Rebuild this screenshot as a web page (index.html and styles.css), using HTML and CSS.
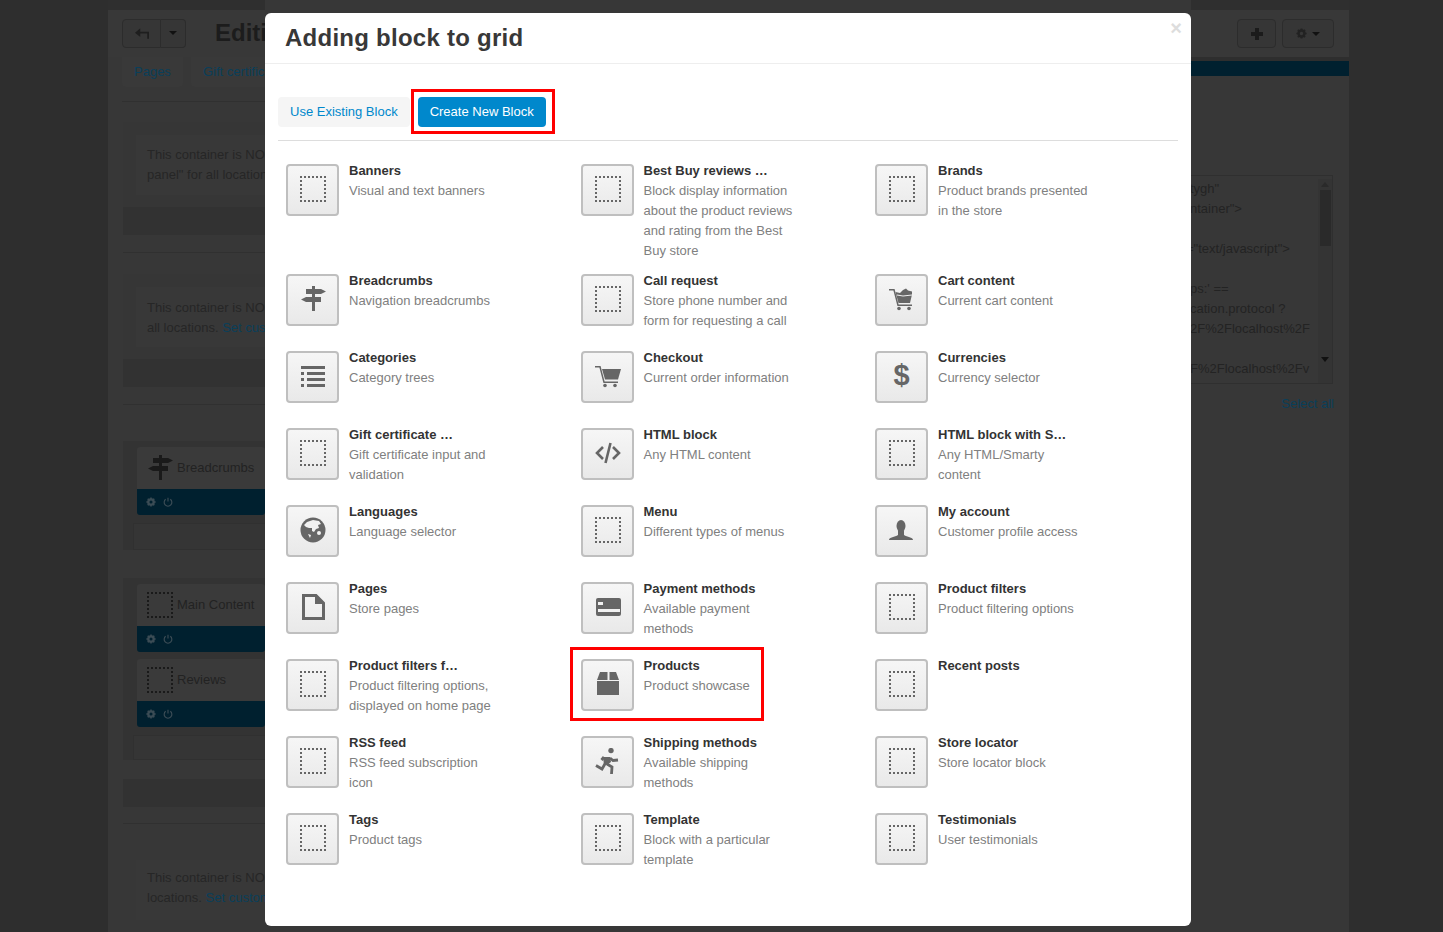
FILE: index.html
```html
<!DOCTYPE html>
<html lang="en">
<head>
    <meta charset="UTF-8">
    <meta name="viewport" content="width=device-width, initial-scale=1.0">
    <title>Adding block to grid</title>
    <link rel="stylesheet" href="styles.css">
</head>
<body>

    <!-- Icon set -->
    <svg class="sprite" xmlns="http://www.w3.org/2000/svg">
        <symbol id="i-dotted" viewBox="0 0 26 26"><rect x="1" y="1" width="24" height="24" fill="none" stroke="currentColor" stroke-width="2" stroke-dasharray="2 2" stroke-dashoffset="1" shape-rendering="crispEdges"/></symbol>
        <symbol id="i-sign" viewBox="0 0 26 26"><path fill="currentColor" d="M12 0h3v3h6l5 2.500-5 2.500h-6v3h6v5h-6v9h-3v-9H6l-5-2.500L6 11h6V8H6V3h6z"/></symbol>
        <symbol id="i-list" viewBox="0 0 26 26"><path fill="currentColor" d="M1 3h24v3H1zM7 9h18v3H7zM7 15h18v3H7zM7 21h18v3H7zM1 9h3v3H1zM1 15h3v3H1zM1 21h3v3H1z"/></symbol>
        <symbol id="i-globe" viewBox="0 0 26 26"><circle cx="13" cy="13" r="12.500" fill="currentColor"/><path fill="#f1f1f1" d="M4 8l3-3 6-2 6 1 2 3-3 1 1 3-3 1-2 3-2-1v-3H9L6 10z"/><circle cx="19" cy="16" r="2" fill="#f1f1f1"/><path fill="#f1f1f1" d="M8 17l3 1-1 3z"/></symbol>
        <symbol id="i-cart" viewBox="0 0 26 26"><path fill="none" stroke="currentColor" stroke-width="1.500" d="M0 3.800h5L9 19.300h14"/><path fill="currentColor" d="M7 6h19l-3 10.500H10z"/><circle cx="10" cy="22.500" r="1.800" fill="currentColor"/><circle cx="20" cy="22.500" r="1.800" fill="currentColor"/></symbol>
        <symbol id="i-cart-full" viewBox="0 0 26 26"><path fill="none" stroke="currentColor" stroke-width="1.500" d="M0 3.800h5L9 19.300h14"/><path fill="currentColor" d="M6.500 6l4.500 1 3-3 3-1.500 2 2 4 1v3l-2 8.500H9.500z"/><path fill="none" stroke="#eee" d="M8 9l6 1 9-1"/><circle cx="10" cy="22.500" r="1.800" fill="currentColor"/><circle cx="20" cy="22.500" r="1.800" fill="currentColor"/></symbol>
        <symbol id="i-code" viewBox="0 0 26 26"><path fill="none" stroke="currentColor" stroke-width="2.600" d="M8 7l-6 6 6 6M18 7l6 6-6 6"/><path fill="none" stroke="currentColor" stroke-width="2.600" d="M15.500 3l-5 20"/></symbol>
        <symbol id="i-user" viewBox="0 0 26 26"><ellipse cx="12" cy="9" rx="4.500" ry="6" fill="currentColor"/><path fill="currentColor" d="M0 23c0-3 6-3 9-5v-4h6v4c3 2 9 2 9 5z"/></symbol>
        <symbol id="i-page" viewBox="0 0 26 26"><path fill="none" stroke="currentColor" stroke-width="3" d="M3.500 1.500H16L23.500 9v15.500h-20z"/><path fill="currentColor" d="M15 0l10 10H15z"/></symbol>
        <symbol id="i-card" viewBox="0 0 26 26"><rect x="1" y="4" width="25" height="18" rx="2" fill="currentColor"/><path fill="#f1f1f1" d="M3 8h5v3H3zM3 15h22v3H3z"/></symbol>
        <symbol id="i-box" viewBox="0 0 26 26"><path fill="currentColor" d="M5 1h7.500v8H2zM14.500 1H21l3 8h-9.500zM2 10h22v14H2z"/></symbol>
        <symbol id="i-run" viewBox="0 0 26 26"><circle cx="16" cy="2.600" r="2.700" fill="currentColor"/><path fill="currentColor" d="M8 9h7l1 5-4 3H9z"/><path fill="none" stroke="currentColor" stroke-width="2.800" d="M9 9L6.500 12M15 10l3 2.500 5-.5M10.500 15l-3.500 6-6-3.500M12 16l5 3-.5 7"/></symbol>
        <symbol id="i-gear" viewBox="0 0 26 26"><circle cx="13" cy="13" r="7" fill="none" stroke="currentColor" stroke-width="6"/><path fill="none" stroke="currentColor" stroke-width="4" d="M13 1v4M13 21v4M1 13h4M21 13h4M4.500 4.500l3 3M18.500 18.500l3 3M4.500 21.500l3-3M18.500 7.500l3-3"/></symbol>
        <symbol id="i-power" viewBox="0 0 26 26"><path fill="none" stroke="currentColor" stroke-width="3" d="M7 6a10 10 0 1 0 12 0M13 2v10"/></symbol>
    </svg>

    <!-- Page behind the dialog -->
    <div class="page">
        <div class="col-left">
            <div class="topband"></div>
            <div class="toolbar">
                <div class="btn-group">
                    <span class="btn btn-back">
                        <svg class="back-arrow" viewBox="0 0 16 12"><path fill="currentColor" d="M6 0v4h10v8h-2V6H6v4L0 5z"/></svg>
                    </span>
                    <span class="btn btn-caret"><i class="caret"></i></span>
                </div>
                <h2 class="page-title">Editi</h2>
            </div>
            <div class="tabs">
                <a class="tab">Pages</a>
                <a class="tab">Gift certific</a>
            </div>

            <div class="section section-first">
                <div class="panel">
                    <p class="note">This container is NO<br>panel" for all location</p>
                    <div class="strip"></div>
                </div>
            </div>
            <div class="section">
                <div class="panel">
                    <p class="note note-low">This container is NO<br>all locations. <a>Set cus</a></p>
                    <div class="strip"></div>
                </div>
            </div>
            <div class="section section-grid">
                <div class="panel panel-wide">
                    <div class="grid-cell">
                        <div class="block">
                            <div class="block-head">
                                <svg class="block-icon"><use href="#i-sign"/></svg>
                                Breadcrumbs
                            </div>
                            <div class="block-foot">
                                <svg class="foot-icon"><use href="#i-gear"/></svg>
                                <svg class="foot-icon"><use href="#i-power"/></svg>
                            </div>
                        </div>
                        <div class="slot"></div>
                    </div>
                    <div class="grid-cell grid-cell-next">
                        <div class="block">
                            <div class="block-head">
                                <svg class="block-icon"><use href="#i-dotted"/></svg>
                                Main Content
                            </div>
                            <div class="block-foot">
                                <svg class="foot-icon"><use href="#i-gear"/></svg>
                                <svg class="foot-icon"><use href="#i-power"/></svg>
                            </div>
                        </div>
                        <div class="block block-next">
                            <div class="block-head">
                                <svg class="block-icon"><use href="#i-dotted"/></svg>
                                Reviews
                            </div>
                            <div class="block-foot">
                                <svg class="foot-icon"><use href="#i-gear"/></svg>
                                <svg class="foot-icon"><use href="#i-power"/></svg>
                            </div>
                        </div>
                        <div class="slot slot-short"></div>
                    </div>
                    <div class="strip strip-grid"></div>
                </div>
            </div>
            <div class="section section-last">
                <div class="panel panel-wide">
                    <p class="note note-high">This container is NO<br>locations. <a>Set custom</a></p>
                </div>
            </div>
        </div>

        <div class="col-right">
            <div class="topband"></div>
            <div class="toolbar toolbar-right">
                <span class="btn btn-plus">
                    <svg class="plus" viewBox="0 0 12 12"><path fill="currentColor" d="M4 0h4v4h4v4H8v4H4V8H0V4h4z"/></svg>
                </span>
                <span class="btn btn-gear">
                    <svg class="gear"><use href="#i-gear"/></svg>
                    <i class="caret"></i>
                </span>
            </div>
            <div class="bluebar"></div>
            <div class="code-box">
                <div class="code-lines">
                    <div>tygh"</div>
                    <div>ntainer"&gt;</div>
                    <div>&nbsp;</div>
                    <div class="code-back">="text/javascript"&gt;</div>
                    <div>&nbsp;</div>
                    <div>ps:' ==</div>
                    <div>cation.protocol ?</div>
                    <div>2F%2Flocalhost%2F</div>
                    <div>&nbsp;</div>
                    <div>F%2Flocalhost%2Fv</div>
                </div>
                <div class="code-scroll">
                    <i class="scroll-up"></i>
                    <i class="scroll-thumb"></i>
                    <i class="scroll-down"></i>
                </div>
            </div>
            <a class="select-all">Select all</a>
        </div>
    </div>

    <!-- Dialog -->
    <div class="modal">
        <div class="modal-header">
            <h3>Adding block to grid</h3>
            <span class="close">×</span>
        </div>
        <div class="modal-body">
            <div class="pills">
                <a class="pill">Use Existing Block</a>
                <a class="pill pill-active">Create New Block</a>
            </div>
            <div class="block-list">
                <div class="item"><span class="item-icon"><svg><use href="#i-dotted"/></svg></span><div class="item-text"><b>Banners</b><span>Visual and text banners</span></div></div>
                <div class="item"><span class="item-icon"><svg><use href="#i-dotted"/></svg></span><div class="item-text"><b>Best Buy reviews …</b><span>Block display information about the product reviews and rating from the Best Buy store</span></div></div>
                <div class="item"><span class="item-icon"><svg><use href="#i-dotted"/></svg></span><div class="item-text"><b>Brands</b><span>Product brands presented in the store</span></div></div>

                <div class="item"><span class="item-icon"><svg><use href="#i-sign"/></svg></span><div class="item-text"><b>Breadcrumbs</b><span>Navigation breadcrumbs</span></div></div>
                <div class="item"><span class="item-icon"><svg><use href="#i-dotted"/></svg></span><div class="item-text"><b>Call request</b><span>Store phone number and form for requesting a call</span></div></div>
                <div class="item"><span class="item-icon"><svg><use href="#i-cart-full"/></svg></span><div class="item-text"><b>Cart content</b><span>Current cart content</span></div></div>

                <div class="item"><span class="item-icon"><svg><use href="#i-list"/></svg></span><div class="item-text"><b>Categories</b><span>Category trees</span></div></div>
                <div class="item"><span class="item-icon"><svg><use href="#i-cart"/></svg></span><div class="item-text"><b>Checkout</b><span>Current order information</span></div></div>
                <div class="item"><span class="item-icon item-icon-glyph">$</span><div class="item-text"><b>Currencies</b><span>Currency selector</span></div></div>

                <div class="item"><span class="item-icon"><svg><use href="#i-dotted"/></svg></span><div class="item-text"><b>Gift certificate …</b><span>Gift certificate input and validation</span></div></div>
                <div class="item"><span class="item-icon"><svg><use href="#i-code"/></svg></span><div class="item-text"><b>HTML block</b><span>Any HTML content</span></div></div>
                <div class="item"><span class="item-icon"><svg><use href="#i-dotted"/></svg></span><div class="item-text"><b>HTML block with S…</b><span>Any HTML/Smarty content</span></div></div>

                <div class="item"><span class="item-icon"><svg><use href="#i-globe"/></svg></span><div class="item-text"><b>Languages</b><span>Language selector</span></div></div>
                <div class="item"><span class="item-icon"><svg><use href="#i-dotted"/></svg></span><div class="item-text"><b>Menu</b><span>Different types of menus</span></div></div>
                <div class="item"><span class="item-icon"><svg><use href="#i-user"/></svg></span><div class="item-text"><b>My account</b><span>Customer profile access</span></div></div>

                <div class="item"><span class="item-icon"><svg><use href="#i-page"/></svg></span><div class="item-text"><b>Pages</b><span>Store pages</span></div></div>
                <div class="item"><span class="item-icon"><svg><use href="#i-card"/></svg></span><div class="item-text"><b>Payment methods</b><span>Available payment methods</span></div></div>
                <div class="item"><span class="item-icon"><svg><use href="#i-dotted"/></svg></span><div class="item-text"><b>Product filters</b><span>Product filtering options</span></div></div>

                <div class="item"><span class="item-icon"><svg><use href="#i-dotted"/></svg></span><div class="item-text"><b>Product filters f…</b><span>Product filtering options, displayed on home page</span></div></div>
                <div class="item"><span class="item-icon"><svg><use href="#i-box"/></svg></span><div class="item-text"><b>Products</b><span>Product showcase</span></div></div>
                <div class="item"><span class="item-icon"><svg><use href="#i-dotted"/></svg></span><div class="item-text"><b>Recent posts</b></div></div>

                <div class="item"><span class="item-icon"><svg><use href="#i-dotted"/></svg></span><div class="item-text"><b>RSS feed</b><span>RSS feed subscription icon</span></div></div>
                <div class="item"><span class="item-icon"><svg><use href="#i-run"/></svg></span><div class="item-text"><b>Shipping methods</b><span>Available shipping methods</span></div></div>
                <div class="item"><span class="item-icon"><svg><use href="#i-dotted"/></svg></span><div class="item-text"><b>Store locator</b><span>Store locator block</span></div></div>

                <div class="item"><span class="item-icon"><svg><use href="#i-dotted"/></svg></span><div class="item-text"><b>Tags</b><span>Product tags</span></div></div>
                <div class="item"><span class="item-icon"><svg><use href="#i-dotted"/></svg></span><div class="item-text"><b>Template</b><span>Block with a particular template</span></div></div>
                <div class="item"><span class="item-icon"><svg><use href="#i-dotted"/></svg></span><div class="item-text"><b>Testimonials</b><span>User testimonials</span></div></div>
            </div>
        </div>
    </div>

    <!-- Red marks drawn on the screenshot -->
    <div class="mark mark-tab"></div>
    <div class="mark mark-item"></div>

</body>
</html>
```

FILE: styles.css
```css
* {
    box-sizing: border-box;
}
html, body {
    height: 100%;
}
body {
    margin: 0;
    overflow: hidden;
    background-color: #2e2e2e;
    font-family: "Liberation Sans", Arial, sans-serif;
    font-size: 13px;
    line-height: 20px;
    color: #222;
}
.sprite {
    display: none;
}

/* page behind the dialog */
.page {
    display: flex;
    justify-content: space-between;
    width: 1241px;
    height: 932px;
    margin-left: 108px;
    background-color: #373737;
}
.col-left {
    width: 157px;
    white-space: nowrap;
}
.col-right {
    width: 158px;
    white-space: nowrap;
}
.topband {
    height: 10px;
    background-color: #2f2f2f;
}
.toolbar {
    display: flex;
    align-items: center;
    height: 47px;
    padding: 0 0 1px 14px;
    background-color: #383838;
}
.btn-group {
    display: flex;
}
.btn {
    display: flex;
    align-items: center;
    justify-content: center;
    height: 29px;
    background-color: #363636;
    border: 1px solid #2c2c2c;
    border-radius: 4px;
    color: #1e1e1e;
}
.btn-back {
    width: 39px;
    border-radius: 4px 0 0 4px;
}
.btn-caret {
    width: 25px;
    border-left: 0;
    border-radius: 0 4px 4px 0;
}
.back-arrow {
    width: 14px;
    height: 11px;
}
.caret {
    display: inline-block;
    border-top: 4px solid #111;
    border-left: 4px solid transparent;
    border-right: 4px solid transparent;
}
.page-title {
    margin: 0 0 0 29px;
    font-size: 24px;
    line-height: 30px;
    color: #1c1c1c;
}
.tabs {
    display: flex;
    height: 45px;
    margin-left: 14px;
    gap: 8px;
    border-bottom: 1px solid #303030;
}
.tab {
    height: 30px;
    padding: 5px 12px;
    color: #0a3f5a;
    background-color: #393939;
    border-radius: 0 0 4px 4px;
}
.section {
    margin: 21px 0 0 15px;
    padding-bottom: 17px;
    border-bottom: 1px solid #303030;
}
.section-first {
    margin-top: 20px;
}
.section-grid {
    padding-bottom: 16px;
}
.section-last {
    border-bottom: 0;
}
.panel {
    padding-top: 13px;
    background-color: #363636;
}
.panel-wide {
    padding-top: 15px;
    background-color: transparent;
}
.note {
    height: 60px;
    margin: 0 0 12px 13px;
    padding: 10px 0 0 11px;
    color: #262626;
    background-color: #383838;
}
.note-low {
    padding-top: 11px;
}
.note-high {
    padding-top: 8px;
}
.note a, .select-all {
    color: #0a3f5a;
}
.strip {
    height: 28px;
    background-color: #323232;
}
.grid-cell {
    padding: 6px 0 0 14px;
    background-color: #333;
}
.grid-cell-next {
    margin-top: 28px;
}
.block {
    border-radius: 3px;
    overflow: hidden;
}
.block-next {
    margin-top: 7px;
}
.block-head {
    display: flex;
    align-items: center;
    gap: 4px;
    height: 42px;
    padding-left: 10px;
    color: #222;
    background-color: #3a3a3a;
}
.block-icon {
    width: 26px;
    height: 26px;
    color: #1a1a1a;
}
.block-foot {
    display: flex;
    gap: 7px;
    align-items: center;
    height: 26px;
    padding-left: 9px;
    color: #3b4c55;
    background-color: #00202f;
}
.foot-icon {
    width: 10px;
    height: 10px;
}
.slot {
    height: 27px;
    margin: 8px 0 0 -4px;
    border: 1px solid #303030;
    border-right: 0;
    background-color: #353535;
}
.slot-short {
    height: 25px;
}
.strip-grid {
    margin-top: 19px;
}
.toolbar-right {
    gap: 6px;
    padding: 0 0 0 46px;
}
.btn-plus {
    width: 39px;
}
.plus {
    width: 12px;
    height: 12px;
    color: #1b1b1b;
}
.btn-gear {
    gap: 5px;
    width: 52px;
}
.gear {
    width: 11px;
    height: 11px;
    color: #222;
}
.bluebar {
    height: 19px;
    border-top: 4px solid #2e2e2e;
    background-color: #00202f;
}
.code-box {
    display: flex;
    justify-content: space-between;
    width: 142px;
    height: 209px;
    margin-top: 99px;
    padding-top: 3px;
    border: 1px solid #2f2f2f;
    border-left: 0;
    color: #232323;
    overflow: hidden;
}
.code-lines {
    width: 127px;
    margin-left: -1px;
}
.code-back {
    margin-left: -4px;
}
.code-scroll {
    display: flex;
    flex-direction: column;
    align-items: center;
    width: 14px;
    height: 205px;
    padding-top: 3px;
    background-color: #343434;
}
.scroll-up {
    border-bottom: 5px solid #2a2a2a;
    border-left: 4px solid transparent;
    border-right: 4px solid transparent;
}
.scroll-thumb {
    width: 11px;
    height: 56px;
    margin-top: 3px;
    background-color: #2a2a2a;
}
.scroll-down {
    margin-top: 111px;
    border-top: 5px solid #111;
    border-left: 4px solid transparent;
    border-right: 4px solid transparent;
}
.select-all {
    display: block;
    width: 143px;
    margin-top: 10px;
    text-align: right;
}

/* dialog */
.modal {
    position: absolute;
    top: 13px;
    left: 265px;
    width: 926px;
    height: 913px;
    background-color: #fff;
    border-radius: 6px;
    color: #333;
}
.modal-header {
    display: flex;
    justify-content: space-between;
    height: 51px;
    padding: 10px 9px 0 20px;
    border-bottom: 1px solid #eee;
}
.modal-header h3 {
    margin: 0;
    font-size: 24px;
    line-height: 30px;
    font-weight: bold;
    letter-spacing: 0.25px;
    color: #383838;
}
.close {
    font-size: 20px;
    line-height: 10px;
    font-weight: bold;
    color: #ddd;
}
.modal-body {
    padding: 33px 13px 0;
}
.pills {
    display: flex;
    gap: 8px;
    height: 44px;
    border-bottom: 1px solid #ddd;
}
.pill {
    height: 30px;
    padding: 5px 12px;
    color: #0088cc;
    background-color: #f5f5f5;
    border-radius: 4px;
}
.pill-active {
    color: #fff;
    background-color: #0088cc;
}
.block-list {
    display: grid;
    grid-template-columns: repeat(3, 294.5px);
    padding-top: 19px;
}
.item {
    display: flex;
    gap: 10px;
    min-height: 77px;
    padding: 0 0 9px 8px;
}
.item-icon {
    flex: none;
    width: 53px;
    height: 52px;
    margin-top: 4px;
    padding: 10px 0 0 12px;
    color: #666;
    background: linear-gradient(#f6f6f6, #e9e9e9);
    border: 2px solid #bfbfbf;
    border-radius: 4px;
}
.item-icon svg {
    display: block;
    width: 26px;
    height: 26px;
}
.item-icon-glyph {
    padding: 0;
    font-size: 29px;
    line-height: 44px;
    font-weight: bold;
    text-align: center;
}
.item-text {
    width: 151px;
    padding-top: 1px;
}
.item-text b, .item-text span {
    display: block;
}
.item-text span {
    color: #808080;
}

/* red marks */
.mark {
    position: absolute;
    border: 3px solid #f00;
}
.mark-tab {
    top: 89px;
    left: 411px;
    width: 144px;
    height: 45px;
}
.mark-item {
    top: 647px;
    left: 570px;
    width: 194px;
    height: 74px;
}
```
